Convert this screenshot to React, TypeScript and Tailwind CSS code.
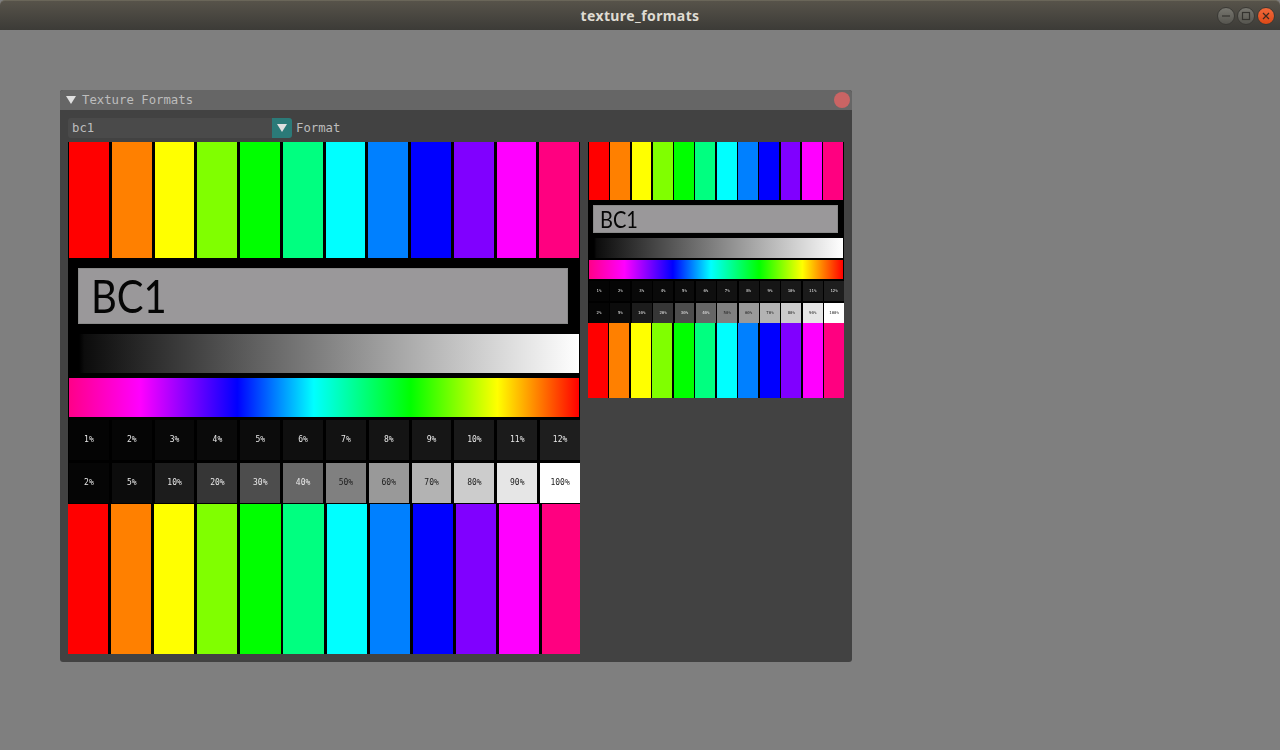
const HUES = [
  'bg-[#ff0000]', 'bg-[#ff8000]', 'bg-[#ffff00]', 'bg-[#80ff00]',
  'bg-[#00ff00]', 'bg-[#00ff80]', 'bg-[#00ffff]', 'bg-[#0080ff]',
  'bg-[#0000ff]', 'bg-[#8000ff]', 'bg-[#ff00ff]', 'bg-[#ff0080]',
];

const ROW_A = [
  { label: '1%', bg: 'bg-[#040404]' }, { label: '2%', bg: 'bg-[#050505]' }, { label: '3%', bg: 'bg-[#080808]' },
  { label: '4%', bg: 'bg-[#0a0a0a]' }, { label: '5%', bg: 'bg-[#0c0c0c]' }, { label: '6%', bg: 'bg-[#0f0f0f]' },
  { label: '7%', bg: 'bg-[#121212]' }, { label: '8%', bg: 'bg-[#141414]' }, { label: '9%', bg: 'bg-[#161616]' },
  { label: '10%', bg: 'bg-[#191919]' }, { label: '11%', bg: 'bg-[#1b1b1b]' }, { label: '12%', bg: 'bg-[#1e1e1e]' },
];

const ROW_B = [
  { label: '2%', bg: 'bg-[#050505]' }, { label: '5%', bg: 'bg-[#0c0c0c]' }, { label: '10%', bg: 'bg-[#1c1c1c]' },
  { label: '20%', bg: 'bg-[#363636]' }, { label: '30%', bg: 'bg-[#4d4d4d]' }, { label: '40%', bg: 'bg-[#666666]' },
  { label: '50%', bg: 'bg-[#808080]', dark: true }, { label: '60%', bg: 'bg-[#999999]', dark: true }, { label: '70%', bg: 'bg-[#b3b3b3]', dark: true },
  { label: '80%', bg: 'bg-[#cccccc]', dark: true }, { label: '90%', bg: 'bg-[#e6e6e6]', dark: true }, { label: '100%', bg: 'bg-[#ffffff]', dark: true },
];

const RAINBOW =
  'bg-[linear-gradient(to_right,#ff0088_0%,#ff00ff_14%,#0000ff_33%,#00ffff_48%,#00ff00_67%,#ffff00_84%,#ff0000_100%)]';

const GREY_RAMP =
  'bg-[linear-gradient(to_right,#000000_2%,#0c0c0c_3%,#ffffff_100%)]';

const BIG = {
  wrap: 'w-[512px] h-[512px]',
  top: 'h-[116px] gap-[3px] px-px',
  boxWrap: 'pt-[10px] pb-[10px] pl-[10px] pr-[12px]',
  box: 'h-[56px] pl-[12px] text-[46px]',
  grad: 'h-[39px] ml-px mr-px',
  rainbow: 'h-[39px] mt-[5px] ml-px mr-px',
  rowA: 'h-[40px] mt-[3px] gap-[3px] pl-px',
  rowB: 'h-[40px] mt-[3px] gap-[3px] pl-px',
  cell: 'text-[8px] blur-[0.35px]',
  bottom: 'h-[150px] mt-px gap-[2.91px] grid-cols-[repeat(11,40.2px)_38px]',
};

const SMALL = {
  wrap: 'w-[256px] h-[256px]',
  top: 'h-[58px] gap-[1.5px] px-px',
  boxWrap: 'pt-[5px] pb-[5px] pl-[5px] pr-[6px]',
  box: 'h-[28px] pl-[6px] text-[23px]',
  grad: 'h-[20px] ml-px mr-px',
  rainbow: 'h-[19px] mt-[2px] ml-px mr-px',
  rowA: 'h-[20px] mt-[2px] gap-[1.5px] pl-px',
  rowB: 'h-[20px] mt-[2px] gap-[1.5px] pl-px',
  cell: 'text-[4px] blur-[0.2px]',
  bottom: 'h-[75px] gap-[1.5px] grid-cols-12',
};

function TextureChart({ size, name }: { size: typeof BIG; name: string }) {
  return (
    <div className={`${size.wrap} bg-black shrink-0 flex flex-col overflow-hidden`}>
      <div className={`${size.top} grid grid-cols-12`}>
        {HUES.map((c) => <div key={c} className={c}></div>)}
      </div>
      <div className={size.boxWrap}>
        <div className={`${size.box} flex items-center bg-[#9a989a] border border-[#8a8a8a] text-[#050505] font-['Lato',sans-serif] leading-none`}>
          <span className="scale-x-[0.87] origin-left">{name}</span>
        </div>
      </div>
      <div className={`${size.grad} ${GREY_RAMP}`}></div>
      <div className={`${size.rainbow} ${RAINBOW}`}></div>
      <div className={`${size.rowA} grid grid-cols-12`}>
        {ROW_A.map((c) => (
          <div key={c.label} className={`${c.bg} flex items-center justify-center text-[#e8e8e8] font-['DejaVu_Sans_Mono',monospace]`}>
            <span className={size.cell}>{c.label}</span>
          </div>
        ))}
      </div>
      <div className={`${size.rowB} grid grid-cols-12`}>
        {ROW_B.map((c) => (
          <div key={c.label} className={`${c.bg} flex items-center justify-center font-['DejaVu_Sans_Mono',monospace] ${c.dark ? 'text-[#1c1c1c]' : 'text-[#e8e8e8]'}`}>
            <span className={size.cell}>{c.label}</span>
          </div>
        ))}
      </div>
      <div className={`${size.bottom} grid`}>
        {HUES.map((c) => <div key={c} className={c}></div>)}
      </div>
    </div>
  );
}

function Triangle() {
  return (
    <svg width="10" height="8" viewBox="0 0 10 8" className="shrink-0">
      <path d="M0 0H10L5 8Z" fill="#e0e0e0" />
    </svg>
  );
}

export default function App() {
  return (
    <div className="w-[1280px] h-[750px] bg-[#7f7f7f] flex flex-col overflow-hidden">
      {/* title bar */}
      <div className="h-[30px] shrink-0 grid grid-cols-[1fr_auto_1fr] items-center rounded-t-[5px] bg-gradient-to-b from-[#57534a] to-[#3c3b37] border-t border-[#6a6659]">
        <div></div>
        <span className="text-[14px] font-bold text-[#dfdbd2] tracking-[0.4px] font-['Noto_Sans',sans-serif]">texture_formats</span>
        <div className="flex justify-end items-center gap-[2px] pr-[5px]">
          <button className="w-[18px] h-[18px] rounded-full bg-gradient-to-b from-[#77766f] to-[#56554f] border border-[#3a3935] flex items-center justify-center">
            <svg width="10" height="10" viewBox="0 0 10 10"><path d="M1 5H9" stroke="#34332f" strokeWidth="1.2" /></svg>
          </button>
          <button className="w-[18px] h-[18px] rounded-full bg-gradient-to-b from-[#77766f] to-[#56554f] border border-[#3a3935] flex items-center justify-center">
            <svg width="10" height="10" viewBox="0 0 10 10"><rect x="1.5" y="1.5" width="7" height="7" fill="none" stroke="#34332f" strokeWidth="1.2" /></svg>
          </button>
          <button className="w-[18px] h-[18px] rounded-full bg-gradient-to-b from-[#f0693a] to-[#dd4814] border border-[#3a3935] flex items-center justify-center">
            <svg width="10" height="10" viewBox="0 0 10 10"><path d="M2 2L8 8M8 2L2 8" stroke="#3c2a20" strokeWidth="1.2" /></svg>
          </button>
        </div>
      </div>

      {/* canvas */}
      <div className="pt-[60px] pl-[60px]">
        <div className="w-[792px] h-[572px] rounded-[3px] overflow-hidden bg-[#424242] flex flex-col font-['DejaVu_Sans_Mono',monospace] text-[12.3px] text-[#bdbdbd]">
          <div className="h-[20px] shrink-0 bg-[#666666] flex items-center pl-[6px] pr-[2px]">
            <Triangle />
            <span className="ml-[6px] flex-1 pt-px">Texture Formats</span>
            <div className="w-[16px] h-[16px] rounded-full bg-[#c96464]"></div>
          </div>
          <div className="pt-[8px] pl-[8px] flex flex-col gap-[4px]">
            <div className="h-[20px] flex items-center">
              <div className="w-[204px] h-full bg-[#4a4a4a] rounded-l-[3px] pl-[4px] pt-px flex items-center">bc1</div>
              <div className="w-[20px] h-full bg-[#2b7a78] rounded-r-[3px] flex items-center justify-center"><Triangle /></div>
              <span className="ml-[4px] pt-px">Format</span>
            </div>
            <div className="flex items-start gap-[8px]">
              <TextureChart size={BIG} name="BC1" />
              <TextureChart size={SMALL} name="BC1" />
            </div>
          </div>
        </div>
      </div>
    </div>
  );
}
